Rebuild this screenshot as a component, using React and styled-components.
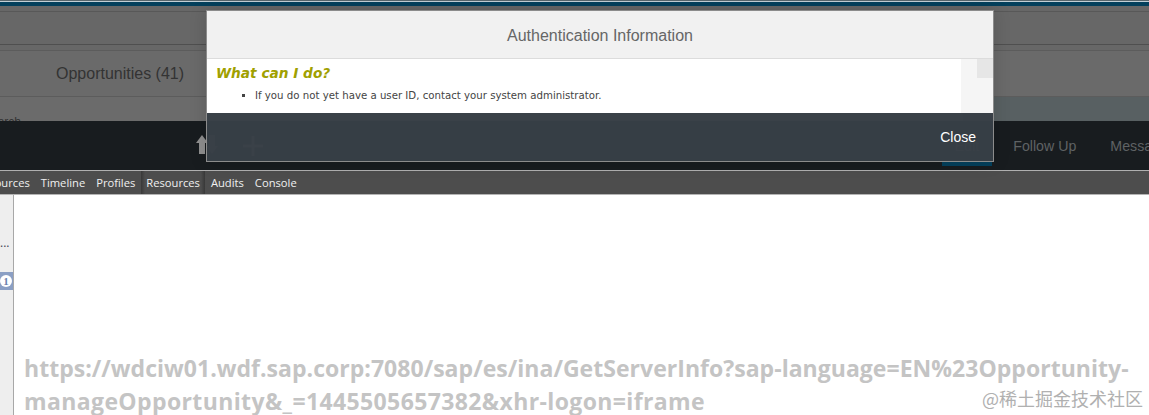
import React from 'react';
import styled, { createGlobalStyle } from 'styled-components';

const GlobalStyle = createGlobalStyle`
  html, body {
    margin: 0;
    padding: 0;
    background: #fff;
    overflow: hidden;
  }
  * {
    box-sizing: border-box;
  }
`;

const Page = styled.div`
  position: relative;
  width: 1149px;
  height: 415px;
  overflow: hidden;
  display: flex;
  flex-direction: column;
  font-family: "Liberation Sans", Arial, sans-serif;
`;

const TopStrip = styled.div`
  height: 6px;
  flex: none;
  background: #04405c;
  border-top: 1px solid #58666c;
  box-shadow: inset 0 1px 0 #c3d0d6;
`;

const HeaderBand = styled.div`
  height: 44px;
  flex: none;
  padding-top: 5px;
  background: #676767;
`;

const HeaderLine = styled.div`
  height: 34px;
  border-top: 1px solid #585858;
  border-bottom: 1px solid #4f4f4f;
`;

const TabsBand = styled.div`
  height: 47px;
  flex: none;
  display: flex;
  align-items: center;
  padding-left: 56px;
  background: #6a6a6a;
  border-top: 1px solid #5c5c5c;
  border-bottom: 1px solid #5c5c5c;
`;

const TabLabel = styled.span`
  font-size: 16px;
  color: #333;
`;

const SearchBand = styled.div`
  height: 24px;
  flex: none;
  display: flex;
  justify-content: space-between;
  background: #6b6b6b;
  overflow: hidden;
`;

const SearchText = styled.span`
  font-size: 12px;
  line-height: 14px;
  margin-top: 18px;
  margin-left: -17px;
  color: #333;
`;

const Banner = styled.div`
  width: 186px;
  background: #586062;
`;

const ActionBar = styled.div`
  height: 49px;
  flex: none;
  display: flex;
  align-items: center;
  background: #181c1f;
  position: relative;
`;

const ActionIcons = styled.div`
  display: flex;
  align-items: center;
  margin-left: 196px;
  gap: 25px;
`;

const ActionTabs = styled.div`
  display: flex;
  margin-left: auto;
  gap: 34px;
  margin-right: -26px;
`;

const ActionTab = styled.span`
  font-size: 14.2px;
  color: #5f6264;
`;

const ActiveMarker = styled.div`
  position: absolute;
  left: 942px;
  bottom: 4px;
  width: 50px;
  height: 4px;
  background: #04405c;
`;

const DevToolbar = styled.div`
  height: 25px;
  flex: none;
  display: flex;
  align-items: center;
  background: #4d4d4d;
  border-top: 1px solid #b0b0b0;
  border-bottom: 1px solid #b4b4b4;
  overflow: hidden;
`;

const DevTab = styled.span`
  font-family: "Open Sans", "Noto Sans", sans-serif;
  font-size: 11.2px;
  color: #f0f0f0;
  padding: 0 5.5px;
  margin-left: ${p => p.$shift || 0}px;
  height: 100%;
  line-height: 23px;
  white-space: nowrap;
  background: ${p =>
    p.$active
      ? 'linear-gradient(to right, #383838, #4d4d4d 4px, #4d4d4d calc(100% - 4px), #383838)'
      : 'transparent'};
`;

const Body = styled.div`
  flex: 1;
  display: flex;
  min-height: 0;
`;

const Sidebar = styled.div`
  width: 14px;
  flex: none;
  background: #eeeeee;
  border-right: 1px solid #a8a8a8;
  padding-top: 41px;
`;

const Ellipsis = styled.div`
  font-family: "Open Sans", sans-serif;
  font-size: 12px;
  line-height: 14px;
  color: #445;
  height: 36px;
`;

const BadgeRow = styled.div`
  height: 18px;
  background: #8b9fc4;
  display: flex;
  align-items: center;
`;

const Badge = styled.span`
  width: 12px;
  height: 12px;
  border-radius: 50%;
  background: #fff;
  color: #6b81ad;
  font-family: "Liberation Serif", serif;
  font-weight: 700;
  font-size: 11px;
  line-height: 12px;
  text-align: center;
`;

const Main = styled.div`
  flex: 1;
  padding: 157px 0 0 10px;
  overflow: hidden;
`;

const Url = styled.div`
  font-family: "Open Sans", "Noto Sans", sans-serif;
  font-weight: 700;
  font-size: 23px;
  line-height: 33px;
  letter-spacing: 0.03px;
  color: #c4c4c4;
`;

const UrlTail = styled.span`
  letter-spacing: 0.38px;
`;

const Watermark = styled.div`
  position: absolute;
  right: 6px;
  bottom: 4px;
  font-family: "Noto Sans CJK SC", sans-serif;
  font-size: 18px;
  line-height: 26px;
  color: #b0b0b0;
`;

const Modal = styled.div`
  position: absolute;
  left: 206px;
  top: 10px;
  width: 788px;
  height: 152px;
  display: flex;
  flex-direction: column;
  border: 1px solid #8c8c8c;
  box-shadow: 0 0 16px rgba(0, 0, 0, 0.15);
`;

const ModalHeader = styled.div`
  height: 48px;
  flex: none;
  display: flex;
  align-items: center;
  justify-content: center;
  padding-top: 2px;
  background: #f1f1f1;
  border-bottom: 1px solid #dcdcdc;
  font-size: 16px;
  color: #666;
`;

const ModalBody = styled.div`
  height: 54px;
  flex: none;
  display: flex;
  background: #fff;
`;

const ModalContent = styled.div`
  flex: 1;
  padding: 6px 0 0 9px;
`;

const HelpTitle = styled.div`
  font-family: "DejaVu Sans", Verdana, sans-serif;
  font-weight: 700;
  font-style: italic;
  font-size: 13.7px;
  line-height: 16px;
  color: #a0a000;
`;

const HelpList = styled.ul`
  list-style: square;
  margin: 8px 0 0;
  padding-left: 39px;
  font-family: "DejaVu Sans", Verdana, sans-serif;
  font-size: 10.2px;
  line-height: 14px;
  color: #444;
`;

const ScrollTrack = styled.div`
  width: 32px;
  flex: none;
  display: flex;
  justify-content: flex-end;
  background: #f5f5f5;
`;

const ScrollThumb = styled.div`
  width: 16px;
  height: 19px;
  background: #e6e6e6;
`;

const ModalFooter = styled.div`
  flex: 1;
  display: flex;
  justify-content: flex-end;
  align-items: flex-start;
  padding: 16px 17px 0 0;
  background: rgba(56, 63, 70, 0.965);
  font-size: 14px;
  color: #fff;
`;

function App() {
  return (
    <>
      <GlobalStyle />
      <Page>
        <TopStrip />
        <HeaderBand>
          <HeaderLine />
        </HeaderBand>
        <TabsBand>
          <TabLabel>Opportunities (41)</TabLabel>
        </TabsBand>
        <SearchBand>
          <SearchText>Search</SearchText>
          <Banner />
        </SearchBand>
        <ActionBar>
          <ActionIcons>
            <svg width="22" height="22" viewBox="0 0 22 22">
              <path d="M6 0 L12 8 H9 V19 H3 V8 H0 Z" fill="#8f8f8f" />
              <path d="M16 19 L10 11 H13 V0 H19 V11 H22 Z" fill="#50565a" />
            </svg>
            <svg width="20" height="20" viewBox="0 0 20 20">
              <path d="M8.5 0 H11.5 V8.5 H20 V11.5 H11.5 V20 H8.5 V11.5 H0 V8.5 H8.5 Z" fill="#70767a" />
            </svg>
          </ActionIcons>
          <ActionTabs>
            <ActionTab>Edit</ActionTab>
            <ActionTab>Follow Up</ActionTab>
            <ActionTab>Messages</ActionTab>
          </ActionTabs>
          <ActiveMarker />
        </ActionBar>
        <DevToolbar>
          <DevTab $shift={-17}>Sources</DevTab>
          <DevTab>Timeline</DevTab>
          <DevTab>Profiles</DevTab>
          <DevTab $active>Resources</DevTab>
          <DevTab>Audits</DevTab>
          <DevTab>Console</DevTab>
        </DevToolbar>
        <Body>
          <Sidebar>
            <Ellipsis>...</Ellipsis>
            <BadgeRow>
              <Badge>1</Badge>
            </BadgeRow>
          </Sidebar>
          <Main>
            <Url>
              https://wdciw01.wdf.sap.corp:7080/sap/es/ina/GetServerInfo?sap-language=EN%23Opportunity-
              <UrlTail>manageOpportunity&amp;_=1445505657382&amp;xhr-logon=iframe</UrlTail>
            </Url>
          </Main>
        </Body>
        <Watermark>@稀土掘金技术社区</Watermark>
        <Modal>
          <ModalHeader>Authentication Information</ModalHeader>
          <ModalBody>
            <ModalContent>
              <HelpTitle>What can I do?</HelpTitle>
              <HelpList>
                <li>If you do not yet have a user ID, contact your system administrator.</li>
              </HelpList>
            </ModalContent>
            <ScrollTrack>
              <ScrollThumb />
            </ScrollTrack>
          </ModalBody>
          <ModalFooter>Close</ModalFooter>
        </Modal>
      </Page>
    </>
  );
}

export default App;
